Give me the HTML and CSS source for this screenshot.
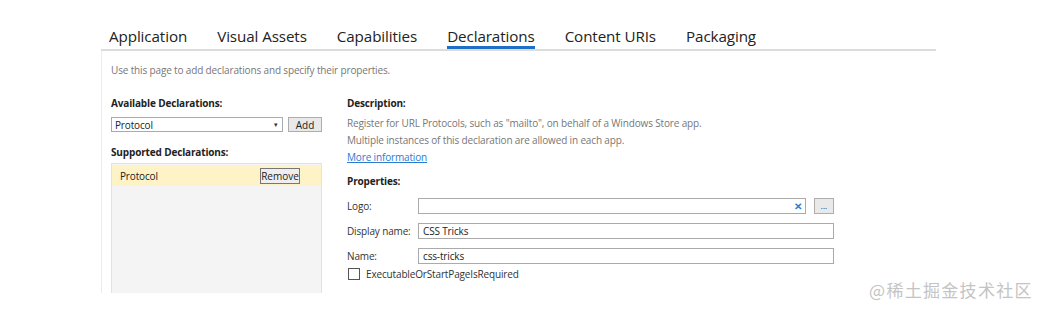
FILE: index.html
```html
<!DOCTYPE html>
<html lang="en">
<head>
    <meta charset="UTF-8">
    <title>Package.appxmanifest - Declarations</title>
    <link rel="stylesheet" href="styles.css">
</head>
<body>

<div class="designer">
    <div class="tabs">
        <span class="tab">Application</span>
        <span class="tab">Visual Assets</span>
        <span class="tab">Capabilities</span>
        <span class="tab active">Declarations</span>
        <span class="tab">Content URIs</span>
        <span class="tab">Packaging</span>
    </div>

    <div class="content">
        <p class="intro">Use this page to add declarations and specify their properties.</p>

        <div class="columns">
            <div class="left-col">
                <h3 class="heading">Available Declarations:</h3>
                <div class="add-row">
                    <div class="combo">
                        <span>Protocol</span>
                        <span class="arrow">&#9662;</span>
                    </div>
                    <button class="btn add-btn">Add</button>
                </div>

                <h3 class="heading supported">Supported Declarations:</h3>
                <div class="decl-list">
                    <div class="decl-item">
                        <span>Protocol</span>
                        <button class="btn remove-btn">Remove</button>
                    </div>
                </div>
            </div>

            <div class="right-col">
                <h3 class="heading">Description:</h3>
                <p class="desc first">Register for URL Protocols, such as "mailto", on behalf of a Windows Store app.</p>
                <p class="desc">Multiple instances of this declaration are allowed in each app.</p>
                <a class="more" href="#">More information</a>

                <h3 class="heading props">Properties:</h3>
                <div class="form">
                    <label>Logo:</label>
                    <div class="logo-row">
                        <div class="field logo-field"><span class="clear">&#10005;</span></div>
                        <button class="btn browse-btn">...</button>
                    </div>

                    <label>Display name:</label>
                    <div class="field">CSS Tricks</div>

                    <label>Name:</label>
                    <div class="field">css-tricks</div>
                </div>
                <div class="check-row">
                    <span class="checkbox"></span>
                    <span>ExecutableOrStartPageIsRequired</span>
                </div>
            </div>
        </div>
    </div>
</div>

<div class="watermark">@稀土掘金技术社区</div>

</body>
</html>
```

FILE: styles.css
```css
body {
    margin: 0;
    background-color: #fff;
    font-family: "Open Sans", "Noto Sans", Arial, sans-serif;
    color: #333;
    width: 1044px;
    height: 312px;
    overflow: hidden;
    position: relative;
}
.designer {
    margin-left: 101px;
    width: 835px;
    padding-top: 25px;
}
.tabs {
    display: flex;
    gap: 30px;
    padding-left: 8px;
    border-bottom: 2px solid #dcdcdc;
    height: 24px;
}
.tab {
    font-size: 15.2px;
    line-height: 22px;
    color: #222;
    letter-spacing: -0.1px;
}
.tab.active {
    border-bottom: 3px solid #1f6fc7;
    height: 21px;
    line-height: 22px;
}
.content {
    border-left: 1px solid #ececec;
    height: 242px;
    padding-left: 9px;
    font-size: 10px;
    letter-spacing: -0.15px;
}
.intro {
    margin: 0;
    padding-top: 12px;
    line-height: 14px;
    color: #777;
}
.columns {
    display: flex;
    margin-top: 19px;
}
.left-col {
    width: 211px;
    margin-right: 25px;
}
.heading {
    margin: 0;
    font-size: 10px;
    line-height: 14px;
    font-weight: bold;
    color: #222;
}
.add-row {
    display: flex;
    gap: 5px;
    margin-top: 7px;
    height: 15px;
}
.combo {
    width: 168px;
    height: 13px;
    border: 1px solid #aaa;
    display: flex;
    justify-content: space-between;
    align-items: center;
    padding: 0 0 0 3px;
    box-sizing: content-box;
    font-size: 10px;
    color: #222;
}
.arrow {
    font-size: 7px;
    margin-right: 4px;
    color: #333;
}
.btn {
    font-family: inherit;
    font-size: 10px;
    padding: 0;
    background-color: #e9e9e9;
    border: 1px solid #adadad;
    color: #222;
    line-height: 12px;
}
.add-btn {
    width: 34px;
    height: 15px;
}
.supported {
    margin-top: 13px;
}
.decl-list {
    margin-top: 4px;
    height: 128px;
    border: 1px solid #e2e2e2;
    border-bottom: none;
    background-color: #f4f4f4;
    padding-top: 1px;
}
.decl-item {
    height: 21px;
    background-color: #fdf3c6;
    display: flex;
    align-items: center;
    justify-content: space-between;
    padding: 0 21px 0 8px;
    color: #222;
}
.remove-btn {
    width: 40px;
    height: 16px;
    border-color: #777;
    background-color: #eee;
}
.right-col {
    width: 487px;
    color: #222;
}
.desc {
    margin: 0;
    margin-top: 3px;
    line-height: 14px;
    color: #777;
}
.desc.first {
    margin-top: 6px;
}
.more {
    display: block;
    margin-top: 3px;
    line-height: 14px;
    color: #2a7bd4;
    text-decoration: underline;
}
.props {
    margin-top: 10px;
}
.form {
    display: grid;
    grid-template-columns: 71px 1fr;
    row-gap: 9px;
    align-items: center;
    margin-top: 10px;
}
.form label {
    color: #333;
}
.logo-row {
    display: flex;
    gap: 8px;
}
.field {
    height: 14px;
    border: 1px solid #aaa;
    padding-left: 4px;
    line-height: 14px;
    color: #222;
    font-size: 10px;
}
.logo-field {
    flex: 1;
    display: flex;
    justify-content: flex-end;
    padding-right: 3px;
}
.clear {
    color: #2a7bd4;
    font-size: 10px;
    font-weight: bold;
}
.browse-btn {
    width: 20px;
    height: 16px;
    font-size: 8px;
    line-height: 10px;
}
.check-row {
    display: flex;
    align-items: center;
    gap: 6px;
    margin-top: 3px;
    color: #333;
}
.checkbox {
    width: 10px;
    height: 10px;
    border: 1px solid #555;
    background-color: #fff;
    margin-left: 1px;
}
.watermark {
    position: absolute;
    left: 869px;
    top: 277px;
    font-family: "Noto Sans CJK SC", sans-serif;
    font-size: 17px;
    color: #c4c4c4;
    letter-spacing: 1.3px;
}
```
